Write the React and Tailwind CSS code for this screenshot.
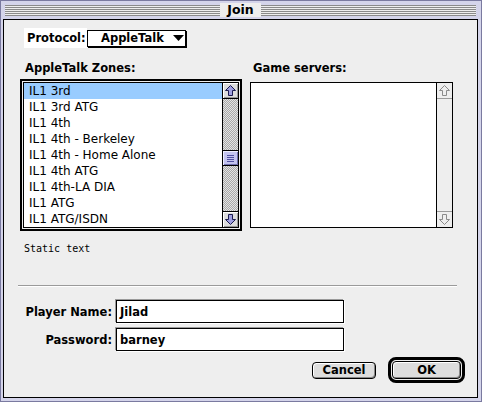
import React from 'react';

const zones = [
  "IL1 3rd",
  "IL1 3rd ATG",
  "IL1 4th",
  "IL1 4th - Berkeley",
  "IL1 4th - Home Alone",
  "IL1 4th ATG",
  "IL1 4th-LA DIA",
  "IL1 ATG",
  "IL1 ATG/ISDN",
];

// Chicago-ish system font
const sys = "font-['DejaVu_Sans',sans-serif] font-bold text-[11.5px] leading-[14px] text-black";

const Arrow = ({ down, active }) => (
  <svg width="15" height="15" viewBox="0 0 15 15" className={down ? "rotate-180" : ""}>
    <path
      d="M7.5 2.5 L12.5 7.5 L9.5 7.5 L9.5 12.5 L5.5 12.5 L5.5 7.5 L2.5 7.5 Z"
      fill={active ? "#a0a0e0" : "#eeeeee"}
      stroke={active ? "#1a1a50" : "#8a8a8a"}
      strokeWidth="1"
    />
  </svg>
);

const Scrollbar = ({ active }) => {
  if (!active) {
    return (
      <div className="flex w-[16px] flex-col border-l border-black bg-[#eeeeee]">
        <div className="flex h-[16px] items-center justify-center border-b border-[#9a9a9a]">
          <Arrow />
        </div>
        <div className="flex-1" />
        <div className="flex h-[16px] items-center justify-center border-t border-[#9a9a9a]">
          <Arrow down />
        </div>
      </div>
    );
  }
  return (
    <div className="flex w-[16px] flex-col border-l border-black">
      <div className="flex h-[16px] items-center justify-center border-b border-black bg-[#dddddd] shadow-[inset_1px_1px_0_#ffffff,inset_-1px_-1px_0_#999999]">
        <Arrow active />
      </div>
      <div className="flex-1 bg-[repeating-conic-gradient(#a8a8a8_0_25%,#e4e4e4_0_50%)] bg-[length:2px_2px]">
        <div className="mt-[51px] flex h-[16px] flex-col items-center justify-center gap-[1px] border-y border-black bg-[#c4c4f0] shadow-[inset_1px_1px_0_#eeeeff,inset_-1px_-1px_0_#7070b0]">
          <div className="h-[1px] w-[7px] bg-[#5050a0]" />
          <div className="h-[1px] w-[7px] bg-[#5050a0]" />
          <div className="h-[1px] w-[7px] bg-[#5050a0]" />
          <div className="h-[1px] w-[7px] bg-[#5050a0]" />
        </div>
      </div>
      <div className="flex h-[16px] items-center justify-center border-t border-black bg-[#dddddd] shadow-[inset_1px_1px_0_#ffffff,inset_-1px_-1px_0_#999999]">
        <Arrow down active />
      </div>
    </div>
  );
};

const MacButton = ({ children, className = "" }) => (
  <div
    className={
      "flex items-center justify-center rounded-[4px] border border-black bg-[#dddddd] shadow-[inset_1px_1px_0_#ffffff,inset_-1px_-1px_0_#888888] " +
      sys +
      " " +
      className
    }
  >
    {children}
  </div>
);

const Field = ({ label, value }) => (
  <div className="flex items-center">
    <div className={"w-[108px] text-right " + sys}>{label}</div>
    <div
      className={
        "ml-[4px] flex h-[23px] w-[228px] items-center border border-black bg-white pl-[3px] shadow-[-1px_-1px_0_#9a9a9a,1px_1px_0_#ffffff] " +
        sys
      }
    >
      {value}
    </div>
  </div>
);

export default function App() {
  return (
    <div className="flex h-[402px] w-[482px] flex-col border border-[#7a7aa0] bg-[#d4d4ea] pb-[3px] pl-[2px] pr-[3px]">
      {/* Title bar */}
      <div className="flex h-[18px] items-center px-[2px]">
        <div className="h-[11px] flex-1 bg-[repeating-linear-gradient(to_bottom,#8a8a8a_0px,#8a8a8a_1px,#eeeeee_1px,#eeeeee_2px)]" />
        <div className={"bg-[#eeeeee] px-[7px] " + sys + " text-[12.5px]"}>Join</div>
        <div className="h-[11px] flex-1 bg-[repeating-linear-gradient(to_bottom,#8a8a8a_0px,#8a8a8a_1px,#eeeeee_1px,#eeeeee_2px)]" />
      </div>

      {/* Content */}
      <div className="flex flex-1 flex-col border border-black bg-[#eeeeee]">
        {/* Protocol row */}
        <div className="ml-[20px] mt-[8px] flex items-center">
          <div className={"flex h-[20px] w-[63px] items-center bg-white pl-[3px] " + sys}>Protocol:</div>
          <div className="flex h-[17px] w-[99px] items-center border border-black bg-white shadow-[1px_1px_0_#000000]">
            <span className={"ml-[13px] " + sys}>AppleTalk</span>
            <svg width="11" height="6" viewBox="0 0 11 6" className="ml-[9px]">
              <path d="M0 0 H11 L5.5 6 Z" fill="#000" />
            </svg>
          </div>
        </div>

        {/* List labels */}
        <div className="mt-[13px] flex">
          <div className={"ml-[21px] w-[228px] " + sys}>AppleTalk Zones:</div>
          <div className={sys}>Game servers:</div>
        </div>

        {/* Lists */}
        <div className="mt-[4px] flex items-start">
          <div className="ml-[16px] border-2 border-black p-[1px]">
            <div className="flex h-[146px] w-[216px] border border-black bg-white">
              <div className="flex-1">
                {zones.map((z, i) => (
                  <div
                    key={z}
                    className={
                      "h-[16px] pl-[5px] font-['DejaVu_Sans',sans-serif] text-[12px] leading-[16px] text-black " +
                      (i === 0 ? "bg-[#99ccff]" : "")
                    }
                  >
                    {z}
                  </div>
                ))}
              </div>
              <Scrollbar active />
            </div>
          </div>
          <div className="ml-[8px] mt-[3px] flex h-[146px] w-[203px] border border-black bg-white">
            <div className="flex-1" />
            <Scrollbar />
          </div>
        </div>

        <div className="ml-[20px] mt-[12px] font-['DejaVu_Sans_Mono',monospace] text-[10px] leading-[12px] text-black">
          Static text
        </div>

        <div className="ml-[14px] mt-[30px] h-[2px] w-[439px] border-t border-[#9a9a9a] border-b border-b-white" />

        <div className="mt-[13px] flex flex-col gap-[5px]">
          <Field label="Player Name:" value="Jilad" />
          <Field label="Password:" value="barney" />
        </div>

        <div className="mt-[6px] flex items-center justify-end gap-[12px] pr-[12px]">
          <MacButton className="h-[17px] w-[64px]">Cancel</MacButton>
          <div className="flex h-[26px] w-[77px] rounded-[8px] border-[3px] border-black p-[1px]">
            <MacButton className="h-full w-full">OK</MacButton>
          </div>
        </div>
      </div>
    </div>
  );
}
